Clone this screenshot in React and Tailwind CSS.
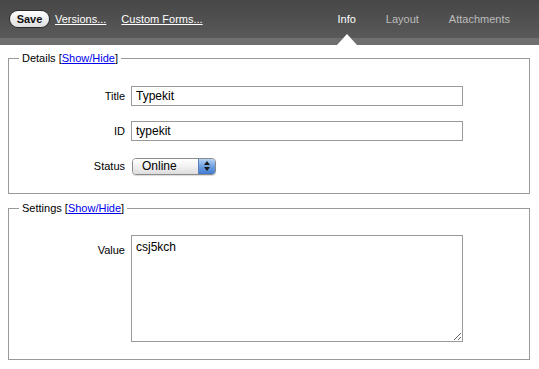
import React from "react";

const font = { fontFamily: '"Liberation Sans", Arial, sans-serif' };

// select in the old Mac popup style
const StatusSelect = () => (
  <div className="flex h-[17px] w-[84px] overflow-hidden rounded-[4px] border border-[#8a8a8a] shadow-[0_1px_1px_rgba(0,0,0,0.15)]">
    <div className="flex flex-1 items-center bg-gradient-to-b from-white via-[#f1f1f1] to-[#dcdcdc] pl-[9px] text-[12px] text-black">
      Online
    </div>
    <div className="flex w-[17px] flex-col items-center justify-center gap-[2px] border-l border-[#5b7fb8] bg-gradient-to-b from-[#b9d3f3] via-[#6e9fe0] to-[#3f7ad0]">
      <svg width="6" height="4" viewBox="0 0 6 4">
        <path d="M3 0 L6 4 L0 4 Z" fill="#1a1a1a" />
      </svg>
      <svg width="6" height="4" viewBox="0 0 6 4">
        <path d="M0 0 L6 0 L3 4 Z" fill="#1a1a1a" />
      </svg>
    </div>
  </div>
);

const Legend = ({ title }) => (
  <legend className="ml-[10px] px-[3px] text-[11px] leading-[13px] text-black">
    {title}{" "}
    [<a href="#" className="text-[#0000ee] underline">Show/Hide</a>]
  </legend>
);

const Row = ({ label, children, top }) => (
  <div className={`flex ${top ? "items-start" : "items-center"}`}>
    <label
      className={`w-[122px] pr-[6px] text-right text-[11px] text-black ${
        top ? "pt-[7px]" : ""
      }`}
    >
      {label}
    </label>
    {children}
  </div>
);

export default function App() {
  return (
    <div className="h-[369px] w-[539px] overflow-hidden bg-white" style={font}>
      {/* top bar */}
      <div className="flex h-[38px] items-center bg-gradient-to-b from-[#474747] to-[#595959]">
        <button className="ml-[10px] flex h-[16px] w-[39px] items-center justify-center rounded-full bg-gradient-to-b from-white to-[#dedede] text-[11px] font-bold text-[#111] shadow-[0_0_0_1px_#2b2b2b]">
          Save
        </button>
        <a href="#" className="ml-[6px] text-[11px] text-white underline">
          Versions...
        </a>
        <a href="#" className="ml-[15px] text-[11px] text-white underline">
          Custom Forms...
        </a>
        <div className="ml-auto mr-[29px] flex h-full items-center gap-[30px] text-[11px]">
          <div className="relative flex h-full items-center text-white">
            Info
            <div className="absolute left-1/2 top-[34px] h-0 w-0 -translate-x-1/2 border-x-[10px] border-b-[11px] border-x-transparent border-b-white" />
          </div>
          <span className="text-[#bcbcbc]">Layout</span>
          <span className="text-[#bcbcbc]">Attachments</span>
        </div>
      </div>
      <div className="h-[7px] bg-[#6f6f6f]" />

      <div className="flex flex-col gap-[8px] px-[8px] pt-[7px] pr-[9px]">
        <fieldset className="border border-[#9a9a9a] pb-[17px] pt-[21px]">
          <Legend title="Details" />
          <div className="flex flex-col gap-[15px]">
            <Row label="Title">
              <input
                defaultValue="Typekit"
                className="h-[20px] w-[332px] border border-[#9a9a9a] px-[4px] text-[12px] text-black outline-none"
              />
            </Row>
            <Row label="ID">
              <input
                defaultValue="typekit"
                className="h-[20px] w-[332px] border border-[#9a9a9a] px-[4px] text-[12px] text-black outline-none"
              />
            </Row>
            <Row label="Status">
              <div className="ml-[1px] flex h-[20px] items-center">
                <StatusSelect />
              </div>
            </Row>
          </div>
        </fieldset>

        <fieldset className="border border-[#9a9a9a] pb-[17px] pt-[20px]">
          <Legend title="Settings" />
          <Row label="Value" top>
            <textarea
              defaultValue="csj5kch"
              className="h-[107px] w-[332px] border border-[#9a9a9a] px-[4px] py-[2px] text-[12px] text-black outline-none"
            />
          </Row>
        </fieldset>
      </div>
    </div>
  );
}
